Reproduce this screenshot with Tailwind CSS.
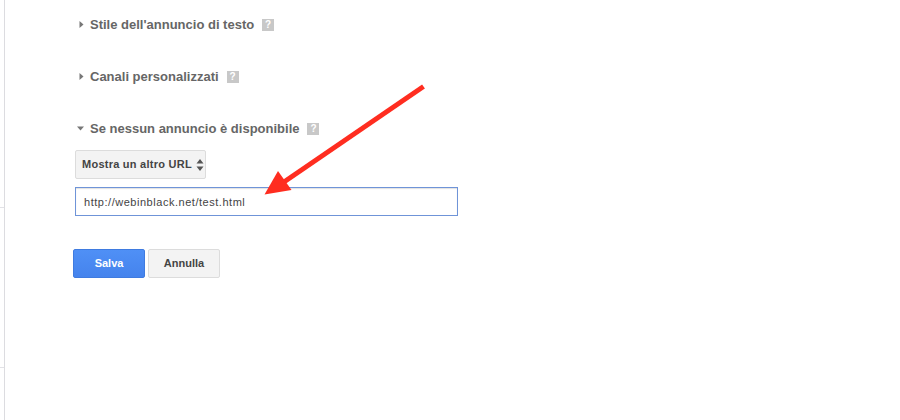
<!doctype html>
<html><head><meta charset="utf-8"><script src="https://cdn.jsdelivr.net/npm/@tailwindcss/browser@4"></script></head>
<body class="bg-white">
<div class="relative w-[900px] h-[420px] overflow-hidden bg-white font-['Liberation_Sans',Arial,sans-serif]">
  <!-- left rail -->
  <div class="absolute left-0 top-0 w-[5px] h-[420px] border-r border-[#dcdce0]">
    <div class="absolute left-0 top-[207px] w-[4px] h-px bg-[#e2e2e6]"></div>
    <div class="absolute left-0 top-[367px] w-[4px] h-px bg-[#e2e2e6]"></div>
  </div>

  <main class="pl-[73px] pt-[17px] flex flex-col items-start">
    <div class="flex items-center h-[15px] pl-[6px] text-[13px] font-bold text-[#666] leading-[15px]">
      <svg width="5" height="7" viewBox="0 0 5 7" class="mr-[6px]"><path d="M0.5 0 L4.5 3.5 L0.5 7Z" fill="#777"/></svg>
      <span>Stile dell'annuncio di testo</span>
      <span class="ml-[8px] w-[12px] h-[12px] bg-[#c8c8c8] text-white text-[10px] leading-[12px] text-center">?</span>
    </div>
    <div class="flex items-center h-[15px] mt-[37px] pl-[6px] text-[13px] font-bold text-[#666] leading-[15px]">
      <svg width="5" height="7" viewBox="0 0 5 7" class="mr-[6px]"><path d="M0.5 0 L4.5 3.5 L0.5 7Z" fill="#777"/></svg>
      <span>Canali personalizzati</span>
      <span class="ml-[8px] w-[12px] h-[12px] bg-[#c8c8c8] text-white text-[10px] leading-[12px] text-center">?</span>
    </div>
    <div class="flex items-center h-[15px] mt-[37px] pl-[4px] text-[13px] font-bold text-[#666] leading-[15px]">
      <svg width="7" height="5" viewBox="0 0 7 5" class="mr-[6px]"><path d="M0 0.5 L7 0.5 L3.5 4.5Z" fill="#777"/></svg>
      <span>Se nessun annuncio è disponibile</span>
      <span class="ml-[8px] w-[12px] h-[12px] bg-[#c8c8c8] text-white text-[10px] leading-[12px] text-center">?</span>
    </div>

    <div class="mt-[14px] ml-[2px] flex items-center h-[29px] w-[131px] pl-[6px] rounded-[2px] border border-[#dcdcdc] bg-[#f3f3f3] text-[11px] tracking-[0.25px] font-bold text-[#444]">
      <span>Mostra un altro URL</span>
      <svg width="8" height="12" viewBox="0 0 8 12" class="ml-[4px]"><path d="M4 0 L7.5 4.5 L0.5 4.5Z M0.5 7.5 L7.5 7.5 L4 12Z" fill="#555"/></svg>
    </div>

    <div class="mt-[8px] ml-[2px] flex items-center h-[29px] w-[383px] pl-[8px] pt-[1px] border border-[#6f94d8] bg-white text-[11px] tracking-[0.53px] text-[#444] shadow-[inset_0_1px_1px_rgba(0,0,0,0.12)]">http://webinblack.net/test.html</div>

    <div class="mt-[33px] flex gap-[3px]">
      <div class="w-[72px] h-[29px] flex items-center justify-center rounded-[2px] border border-[#3f7be0] bg-gradient-to-b from-[#4f90f6] to-[#4583ed] text-[11px] font-bold text-white">Salva</div>
      <div class="w-[72px] h-[29px] flex items-center justify-center rounded-[2px] border border-[#dcdcdc] bg-[#f3f3f3] text-[11px] font-bold text-[#444]">Annulla</div>
    </div>
  </main>

  <!-- annotation arrow -->
  <svg class="absolute left-0 top-0" width="900" height="420" viewBox="0 0 900 420">
    <path d="M423.5 86.5 L281 184" stroke="#ff2d20" stroke-width="5" fill="none"/>
    <path d="M264.5 194.5 L278 171 L291.5 190Z" fill="#ff2d20"/>
  </svg>
</div>
</body></html>
